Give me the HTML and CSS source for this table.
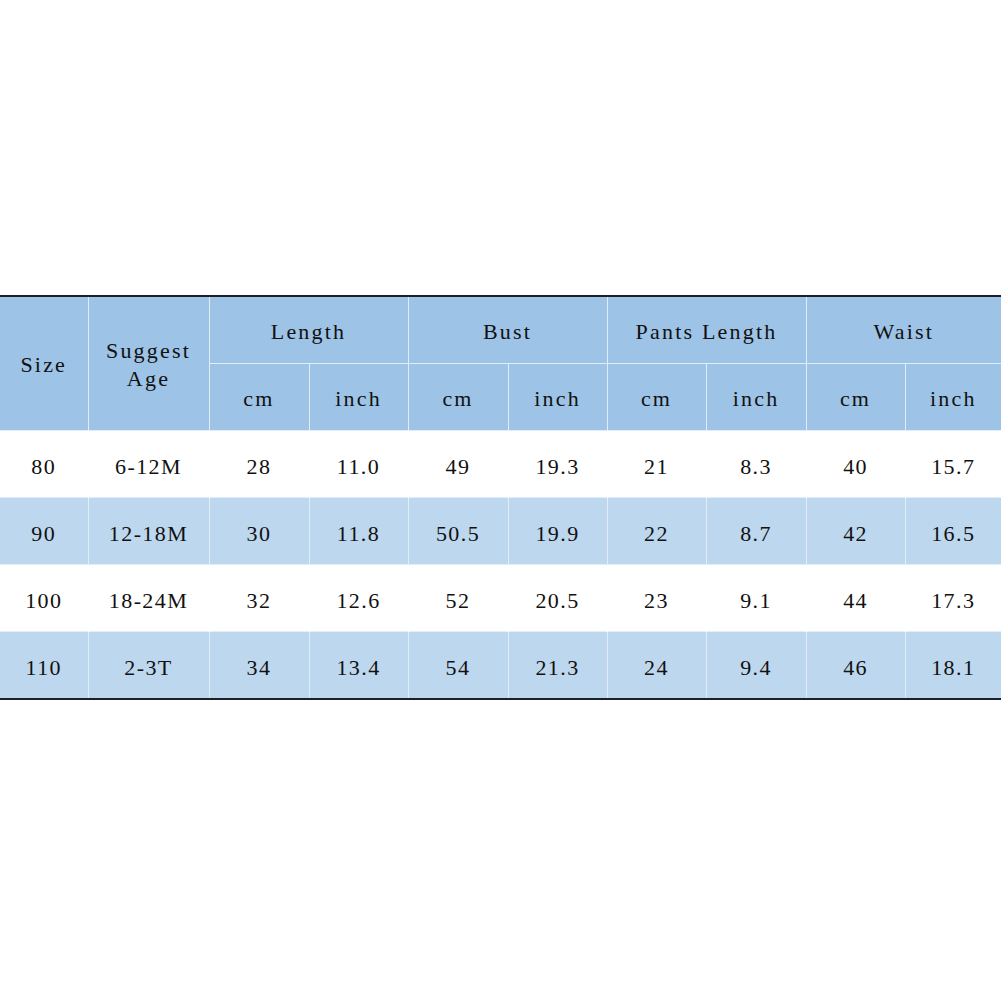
FILE: index.html
```html
<!DOCTYPE html>
<html>
<head>
<meta charset="utf-8">
<link rel="stylesheet" href="styles.css">
</head>
<body>
<div class="page">
<table class="size-table">
  <colgroup>
    <col class="c-size"><col class="c-age">
    <col class="c-a"><col class="c-b"><col class="c-a"><col class="c-b">
    <col class="c-b"><col class="c-a"><col class="c-b"><col class="c-last">
  </colgroup>
  <thead>
    <tr class="h1">
      <th rowspan="2" class="size-head">Size</th>
      <th rowspan="2">Suggest<br>Age</th>
      <th colspan="2">Length</th>
      <th colspan="2">Bust</th>
      <th colspan="2">Pants Length</th>
      <th colspan="2">Waist</th>
    </tr>
    <tr class="h2">
      <th>cm</th><th>inch</th>
      <th>cm</th><th>inch</th>
      <th>cm</th><th>inch</th>
      <th>cm</th><th>inch</th>
    </tr>
  </thead>
  <tbody>
    <tr class="plain">
      <td>80</td><td>6-12M</td><td>28</td><td>11.0</td><td>49</td><td>19.3</td><td>21</td><td>8.3</td><td>40</td><td>15.7</td>
    </tr>
    <tr class="stripe">
      <td>90</td><td>12-18M</td><td>30</td><td>11.8</td><td>50.5</td><td>19.9</td><td>22</td><td>8.7</td><td>42</td><td>16.5</td>
    </tr>
    <tr class="plain">
      <td>100</td><td>18-24M</td><td>32</td><td>12.6</td><td>52</td><td>20.5</td><td>23</td><td>9.1</td><td>44</td><td>17.3</td>
    </tr>
    <tr class="stripe">
      <td>110</td><td>2-3T</td><td>34</td><td>13.4</td><td>54</td><td>21.3</td><td>24</td><td>9.4</td><td>46</td><td>18.1</td>
    </tr>
  </tbody>
</table>
</div>
</body>
</html>
```

FILE: styles.css
```css
html, body {
  margin: 0;
  padding: 0;
  background: #ffffff;
}

.page {
  padding-top: 295px;
}

.size-table {
  width: 1001px;
  border-collapse: collapse;
  table-layout: fixed;
  border-top: 2px solid #1d1f2a;
  border-bottom: 2px solid #1d1f2a;
  font-family: "Liberation Serif", "DejaVu Serif", serif;
  color: #111111;
}

.c-size { width: 88px; }
.c-age { width: 121px; }
.c-a { width: 100px; }
.c-b { width: 99px; }
.c-last { width: 96px; }

.size-table th,
.size-table td {
  padding: 0;
  text-align: center;
  vertical-align: middle;
  font-weight: normal;
  border-left: 1px solid #e3edf8;
  border-right: 1px solid #e3edf8;
}

.size-table th {
  background: #9dc3e6;
  font-size: 22px;
  letter-spacing: 2.2px;
  line-height: 28px;
}

.h1 th {
  height: 63px;
  padding-top: 3px;
  border-bottom: 1px solid #e3edf8;
}

.h2 th {
  height: 63px;
  padding-top: 3px;
}

.size-table td {
  height: 61px;
  padding-top: 5px;
  font-size: 22px;
  letter-spacing: 1.4px;
  border-top: 1px solid #e3edf8;
}

.plain td {
  background: #ffffff;
  border-left-color: #ffffff;
  border-right-color: #ffffff;
}

.stripe td {
  background: #bdd7ee;
}

.size-table tr > :first-child {
  border-left: none;
}

.size-table tr > :last-child {
  border-right: none;
}
```
